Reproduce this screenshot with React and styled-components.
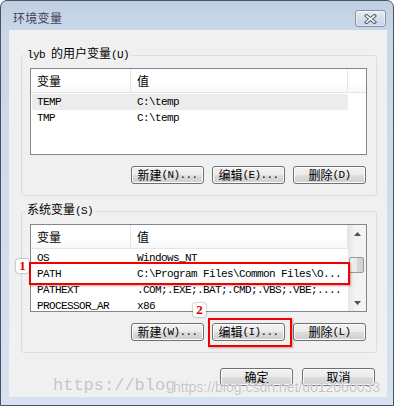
import styled, { createGlobalStyle } from "styled-components";

const cjk = `"Noto Sans CJK SC", "Noto Sans CJK JP", sans-serif`;
const mono = `"Liberation Mono", "DejaVu Sans Mono", monospace`;

const GlobalStyle = createGlobalStyle`
  body {
    margin: 0;
    background: #fff;
    font-family: ${cjk};
  }
`;

const userVars = [
  { name: "TEMP", value: "C:\\temp", selected: true },
  { name: "TMP", value: "C:\\temp" },
];

const systemVars = [
  { name: "OS", value: "Windows_NT" },
  { name: "PATH", value: "C:\\Program Files\\Common Files\\O..." },
  { name: "PATHEXT", value: ".COM;.EXE;.BAT;.CMD;.VBS;.VBE;...." },
  { name: "PROCESSOR_AR", value: "x86" },
];

const CloseGlyph = () => (
  <svg width="13" height="10" viewBox="0 0 13 10">
    <path d="M2.5 1.8 L10.5 8.2 M10.5 1.8 L2.5 8.2" stroke="#4a4f57" strokeWidth="3.4" strokeLinecap="square" fill="none" />
    <path d="M2.5 1.8 L10.5 8.2 M10.5 1.8 L2.5 8.2" stroke="#fff" strokeWidth="1.6" strokeLinecap="square" fill="none" />
  </svg>
);

const Arrow = ({ down }) => (
  <svg width="7" height="4" viewBox="0 0 7 4">
    <path d={down ? "M0 0 H7 L3.5 4 Z" : "M0 4 H7 L3.5 0 Z"} fill="#505050" />
  </svg>
);

const VarList = ({ rows, height, scroll }) => (
  <List $height={height}>
    <ListBody>
      <HeaderRow>
        <HeaderCell>变量</HeaderCell>
        <HeaderCell>值</HeaderCell>
        {!scroll && <HeaderCell $last />}
      </HeaderRow>
      <Rows>
        {rows.map((r) => (
          <Row key={r.name} $selected={r.selected}>
            <Cell>{r.name}</Cell>
            <Cell>{r.value}</Cell>
          </Row>
        ))}
      </Rows>
    </ListBody>
    {scroll && (
      <Scrollbar>
        <ScrollArrow>
          <Arrow />
        </ScrollArrow>
        <Track>
          <Thumb />
        </Track>
        <ScrollArrow>
          <Arrow down />
        </ScrollArrow>
      </Scrollbar>
    )}
  </List>
);

const App = () => {
  return (
    <>
      <GlobalStyle />
      <Window>
        <TitleBar>
          <Title>环境变量</Title>
          <CloseButton>
            <CloseGlyph />
          </CloseButton>
        </TitleBar>
        <Client>
          <Group $top={17}>
            <Legend>
              <Ascii>lyb </Ascii>的用户变量<Ascii>(U)</Ascii>
            </Legend>
            <VarList rows={userVars} height={87} />
            <ButtonBar>
              <Button>
                新建<Ascii>(N)...</Ascii>
              </Button>
              <Button>
                编辑<Ascii>(E)...</Ascii>
              </Button>
              <Button>
                删除<Ascii>(D)</Ascii>
              </Button>
            </ButtonBar>
          </Group>
          <Group $top={7}>
            <Legend>
              系统变量<Ascii>(S)</Ascii>
            </Legend>
            <VarList rows={systemVars} height={88} scroll />
            <ButtonBar>
              <Button>
                新建<Ascii>(W)...</Ascii>
              </Button>
              <Button>
                编辑<Ascii>(I)...</Ascii>
              </Button>
              <Button>
                删除<Ascii>(L)</Ascii>
              </Button>
            </ButtonBar>
          </Group>
          <Footer>
            <Button>确定</Button>
            <Button>取消</Button>
          </Footer>
        </Client>

        <Mark $left={28} $top={261} $w={321} $h={23} />
        <Mark $left={207} $top={317} $w={84} $h={29} />
        <Badge $left={15} $top={258}>1</Badge>
        <Badge $left={192} $top={302}>2</Badge>
        <WatermarkSerif>https://blog</WatermarkSerif>
        <WatermarkSans>https://blog.csdn.net/u012060033</WatermarkSans>
      </Window>
    </>
  );
};

const Window = styled.div`
  position: relative;
  box-sizing: border-box;
  width: 394px;
  height: 406px;
  display: flex;
  flex-direction: column;
  padding: 0 6px 8px 8px;
  border: 1px solid #4c525a;
  border-radius: 7px 7px 0 0;
  background: linear-gradient(to bottom, #bfcfe3 0, #c9d7e9 30px, #d6e2f0 100%);
  overflow: hidden;
`;

const TitleBar = styled.div`
  height: 29px;
  flex-shrink: 0;
  display: flex;
  align-items: flex-start;
  justify-content: space-between;
`;

const Title = styled.div`
  margin: 10px 0 0 4px;
  font-size: 12px;
  line-height: 14px;
  letter-spacing: 0.3px;
  color: #40454d;
`;

const CloseButton = styled.div`
  box-sizing: border-box;
  width: 31px;
  height: 17px;
  margin: 9px 1px 0 0;
  display: flex;
  align-items: center;
  justify-content: center;
  border: 1px solid #8391a8;
  border-radius: 3px;
  background: linear-gradient(to bottom, #e6edf6 0%, #d3deec 50%, #c6d4e6 100%);
  box-shadow: inset 0 0 0 1px rgba(255, 255, 255, 0.5);
`;

const Client = styled.div`
  flex: 1;
  display: flex;
  flex-direction: column;
  padding: 0 10px 0 12px;
  background: #f0f0f0;
`;

const Group = styled.fieldset`
  margin: ${(p) => p.$top}px 0 0;
  padding: 5px 9px 11px 8px;
  min-width: 0;
  border: 1px solid #d5dfe5;
  border-radius: 3px;
`;

const Legend = styled.legend`
  box-sizing: content-box;
  height: 12px;
  margin-left: -5px;
  padding: 0 2px 4px;
  font-size: 12px;
  line-height: 12px;
  color: #000;
`;

const Ascii = styled.span`
  font-family: ${mono};
  font-size: 11px;
  line-height: 12px;
  letter-spacing: -0.6px;
  white-space: pre;
`;

const List = styled.div`
  box-sizing: border-box;
  height: ${(p) => p.$height}px;
  display: flex;
  border: 1px solid #828790;
  background: #fff;
`;

const ListBody = styled.div`
  flex: 1;
  min-width: 0;
  overflow: hidden;
`;

const HeaderRow = styled.div`
  box-sizing: border-box;
  height: 24px;
  display: grid;
  grid-template-columns: 100px 217px 1fr;
  border-bottom: 1px solid #e5e5e5;
  background: linear-gradient(to bottom, #fff 0%, #fff 55%, #f7f8f9 100%);
`;

const HeaderCell = styled.div`
  display: flex;
  align-items: center;
  padding-left: 6px;
  font-size: 12px;
  color: #000;
  border-right: ${(p) => (p.$last ? "none" : "1px solid #e5e5e5")};
`;

const Rows = styled.div`
  padding: 1px 0 0 1px;
`;

const Row = styled.div`
  width: 316px;
  height: 16px;
  display: grid;
  grid-template-columns: 100px 216px;
  background: ${(p) => (p.$selected ? "#ececec" : "transparent")};
`;

const Cell = styled.div`
  padding-left: 5px;
  font-family: ${mono};
  font-size: 11px;
  letter-spacing: -0.6px;
  line-height: 16px;
  color: #000;
  white-space: nowrap;
  overflow: hidden;
`;

const Scrollbar = styled.div`
  width: 18px;
  display: flex;
  flex-direction: column;
  background: linear-gradient(to right, #e6e6e6, #f3f3f3 40%, #f3f3f3);
`;

const ScrollArrow = styled.div`
  height: 17px;
  display: flex;
  align-items: center;
  justify-content: center;
`;

const Track = styled.div`
  flex: 1;
`;

const Thumb = styled.div`
  height: 16px;
  margin: 15px 2px 0 1px;
  box-sizing: border-box;
  border: 1px solid #979797;
  border-radius: 2px;
  background: linear-gradient(to right, #f4f4f4 0%, #e9e9e9 50%, #d8d8d8 51%, #d2d2d2 100%);
`;

const ButtonBar = styled.div`
  display: flex;
  justify-content: flex-end;
  gap: 8px;
  margin-top: 11px;
  padding-right: 1px;
`;

const Footer = styled.div`
  display: flex;
  justify-content: flex-end;
  gap: 9px;
  margin-top: 15px;
  padding-right: 2px;
`;

const Button = styled.div`
  box-sizing: border-box;
  width: 73px;
  height: 18px;
  display: flex;
  align-items: center;
  justify-content: center;
  border: 1px solid #707070;
  border-radius: 3px;
  background: linear-gradient(to bottom, #f2f2f2 0%, #ebebeb 50%, #dddddd 51%, #cfcfcf 100%);
  box-shadow: inset 0 0 0 1px #fcfcfc;
  font-size: 12px;
  line-height: 16px;
  color: #000;
`;

const Mark = styled.div`
  position: absolute;
  left: ${(p) => p.$left}px;
  top: ${(p) => p.$top}px;
  width: ${(p) => p.$w}px;
  height: ${(p) => p.$h}px;
  box-sizing: border-box;
  border: 2px solid #f00000;
  box-shadow: 1px 1px 2px rgba(120, 0, 0, 0.35);
`;

const Badge = styled.div`
  position: absolute;
  left: ${(p) => p.$left}px;
  top: ${(p) => p.$top}px;
  width: 13px;
  height: 14px;
  border-radius: 3px;
  background: #fff;
  box-shadow: 0 0 2px rgba(0, 0, 0, 0.55);
  color: #e60000;
  font-family: "Liberation Serif", serif;
  font-weight: bold;
  font-size: 13px;
  line-height: 14px;
  text-align: center;
`;

const WatermarkSerif = styled.div`
  position: absolute;
  left: 52px;
  top: 375px;
  font-family: ${mono};
  font-size: 17px;
  line-height: 20px;
  color: rgba(160, 160, 160, 0.55);
  white-space: nowrap;
`;

const WatermarkSans = styled.div`
  position: absolute;
  left: 172px;
  top: 377px;
  font-family: "Liberation Sans", sans-serif;
  font-size: 14px;
  line-height: 18px;
  color: rgba(175, 175, 175, 0.75);
  text-shadow: 0 0 1px #fff, 0 0 1px #fff;
  white-space: nowrap;
`;

export default App;
